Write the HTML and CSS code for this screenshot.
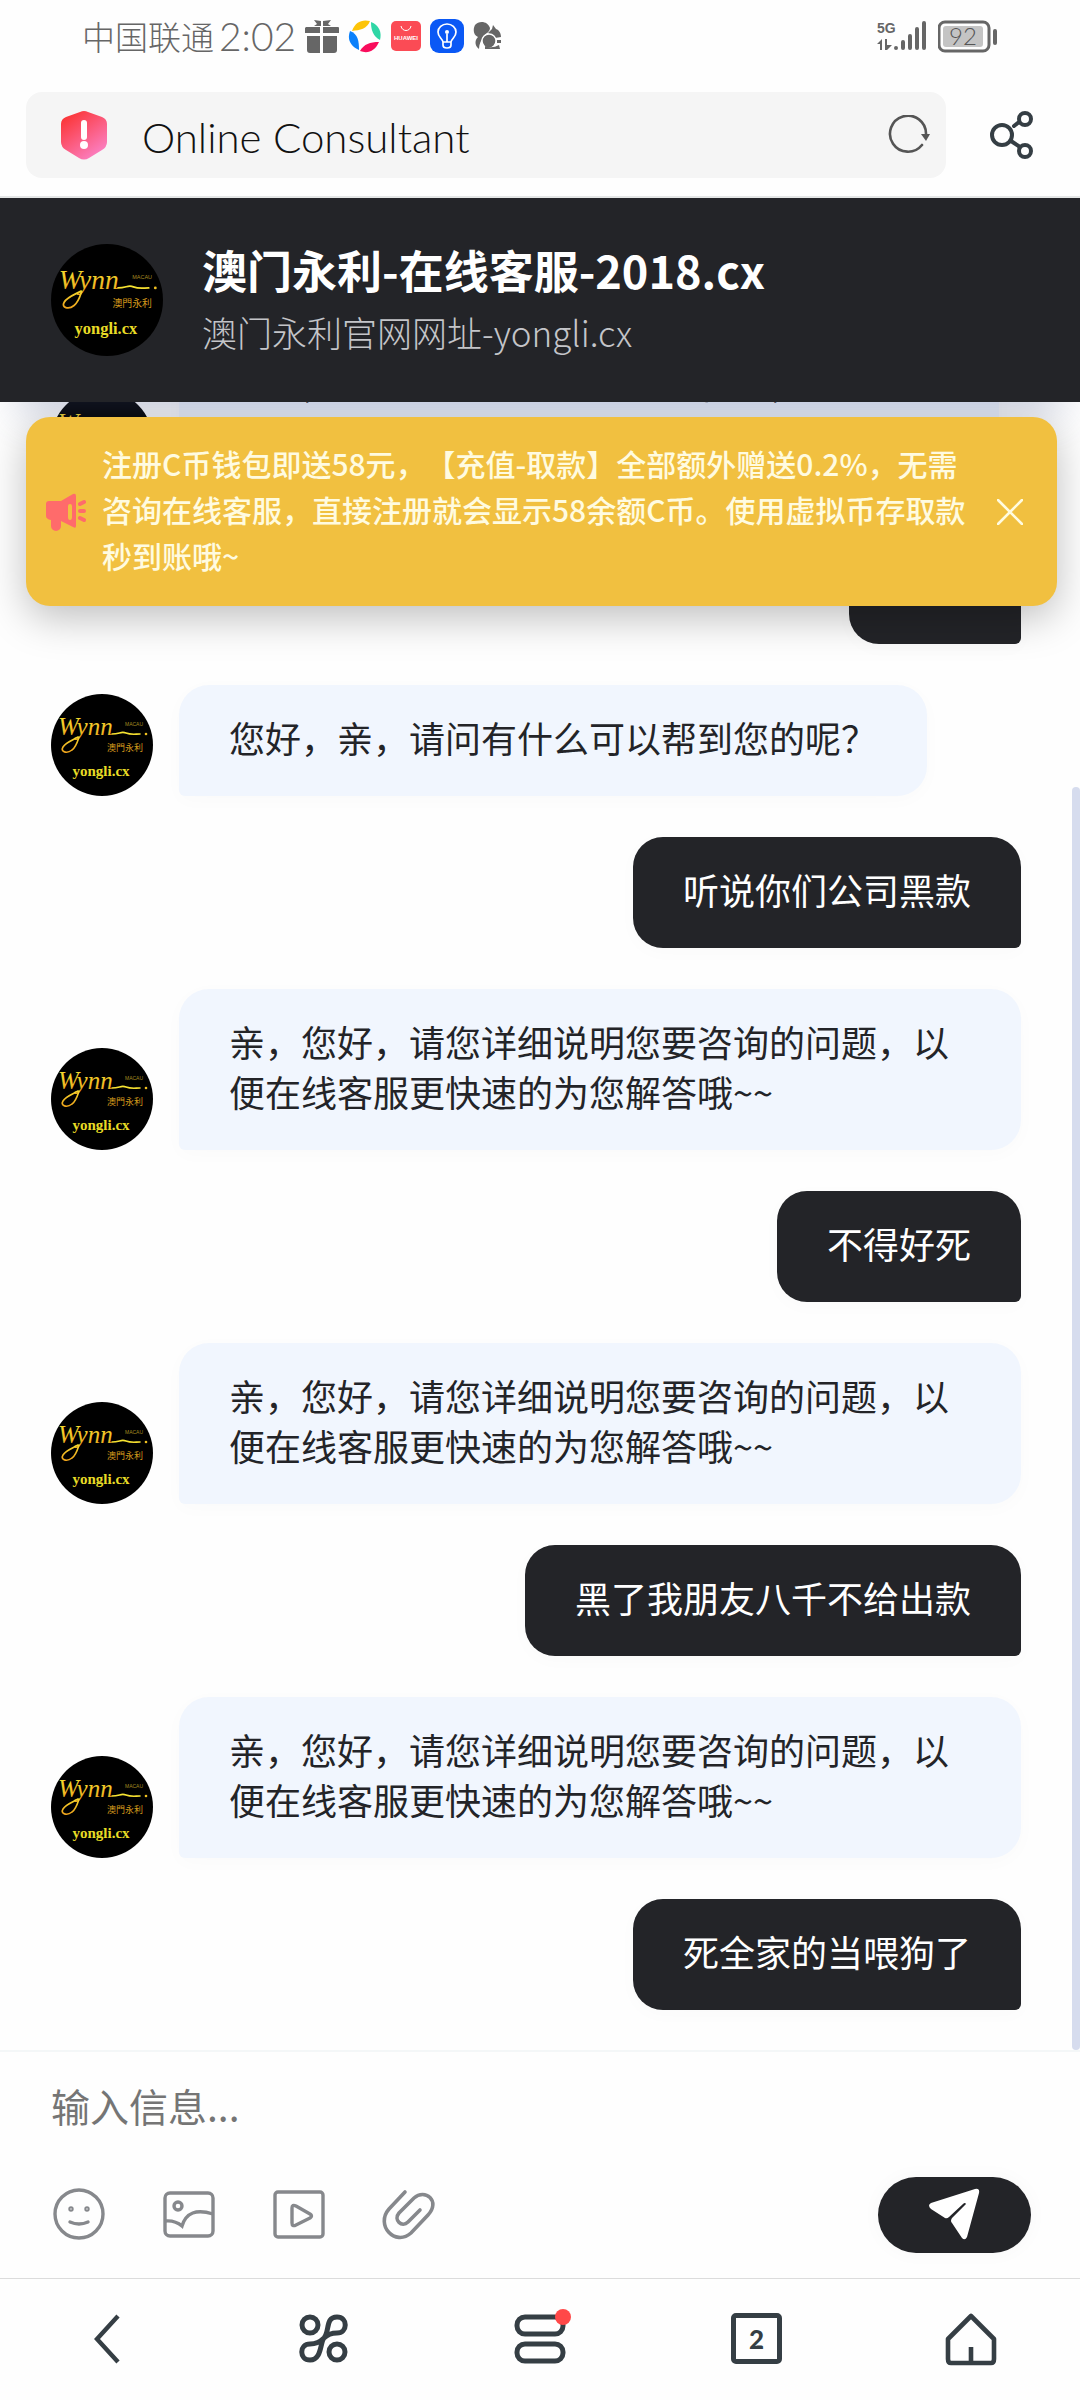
FILE: index.html
```html
<!DOCTYPE html>
<html lang="zh-CN">
<head>
    <meta charset="utf-8">
    <meta name="viewport" content="width=device-width, initial-scale=1">
    <title>Online Consultant</title>
    <link rel="stylesheet" href="styles.css">
</head>
<body>
    <!-- shared avatar -->
    <svg class="defs" width="0" height="0" aria-hidden="true">
        <defs>
            <linearGradient id="gold" x1="0" y1="0" x2="0" y2="1">
                <stop offset="0" stop-color="#f6e532"/>
                <stop offset="1" stop-color="#eda31c"/>
            </linearGradient>
            <linearGradient id="shield" x1="0" y1="0" x2="0.7" y2="1">
                <stop offset="0.1" stop-color="#fb3434"/>
                <stop offset="1" stop-color="#fb80c3"/>
            </linearGradient>
        </defs>
        <symbol id="logo" viewBox="0 0 102 102">
            <circle cx="51" cy="51" r="51" fill="#000"/>
            <text x="7" y="41" class="logo-script">Wynn</text>
            <path d="M28 43c-2 6-3 10-7 13-5 4-12 2-9-3 3-5 10-7 15-10M61 40c8 0 9-3 14-1s9 1 14 1" fill="none" stroke="url(#gold)" stroke-width="1.6" stroke-linecap="round"/>
            <circle cx="95" cy="40" r="1.3" fill="#f0c020"/>
            <text x="74" y="32" class="logo-macau">MACAU</text>
            <text x="56" y="57" class="logo-zh">澳門永利</text>
            <text x="50" y="82" class="logo-site">yongli.cx</text>
        </symbol>
    </svg>

    <div class="status-bar">
        <div class="status-left">
            <span class="carrier">中国联通</span>
            <span class="clock">2:02</span>
            <svg width="34" height="34" viewBox="0 0 34 34" fill="#666"><path d="M1 8h14v6H0V9zM18 8h15q1 0 1 1v5H18zM2 17h13v17H5q-3 0-3-3zM18 17h14v14q0 3-3 3H18zM9 1l7 1v5H9l3-2zM26 1l-8 1v5h8l-3-2z"/></svg>
            <svg width="34" height="34" viewBox="0 0 34 34"><path d="M4 12C7 3 14 0 22 2c-3 8-10 9-18 10z" fill="#fdc408"/><path d="M23 3c8 3 11 10 9 18-7-4-9-10-9-18z" fill="#2fd6a5"/><path d="M31 23c-4 9-11 12-19 9 4-7 10-9 19-9z" fill="#f90d5c"/><path d="M2 12c8 3 9 10 9 19C2 27-1 20 2 12z" fill="#0c81fb"/></svg>
            <svg width="30" height="30" viewBox="0 0 30 30"><rect width="30" height="30" rx="5" fill="#fb4b55"/><path d="M10 5c1 6 9 6 10 0" fill="none" stroke="#fff"/><text x="15" y="19" class="huawei">HUAWEI</text></svg>
            <svg width="34" height="34" viewBox="0 0 34 34"><rect width="34" height="34" rx="9" fill="#0a58f5"/><path d="M13 23c-1-4-5-5-5-10a9 8 0 0 1 18 0c0 5-4 6-5 10zM13 23v3q0 3 4 3t4-3v-3M17 15v8" fill="none" stroke="#fff" stroke-width="1.7"/><circle cx="17" cy="13" r="2" fill="#fff"/></svg>
            <svg width="30" height="30" viewBox="0 0 30 30" fill="#666"><path d="M6 28C1 24 2 19 5 16 0 14 0 8 2 4c4-5 13-4 15 3 0 4-4 5-6 8-3 4-5 8-5 13zM15 12l4-4 1-4 3 4c3 1 5 4 5 8l-6 1z"/><circle cx="16" cy="20" r="7" stroke="#fff" stroke-width="1.4"/><path d="M12 25q7 3 14-1l1 4H12zM24 19h4v3h-4z"/></svg>
        </div>
        <div class="status-right">
            <svg width="52" height="34" viewBox="0 0 52 34" fill="#666"><text x="0" y="14" class="net">5G</text><path d="M0 25l5-5v11H3v-6zM8 20h2v6h5l-5 5H8z"/><path d="M19 29v0M26 23v6M33 17v12M40 10v19M47 4v25" stroke="#666" stroke-width="4" stroke-linecap="round"/></svg>
            <svg width="60" height="34" viewBox="0 0 60 34"><rect x="1" y="3" width="50" height="29" rx="6" fill="none" stroke="#666" stroke-width="3"/><rect x="5" y="7" width="40" height="21" rx="3" fill="#c4c4c4"/><text x="25" y="26" class="level">92</text><path d="M57 12v12" stroke="#666" stroke-width="4" stroke-linecap="round"/></svg>
        </div>
    </div>

    <div class="browser-bar">
        <div class="address">
            <svg width="48" height="50" viewBox="0 0 48 50"><path d="M20 2q4-2 8 0l14 5q5 2 5 7v18q0 5-5 8L29 48q-5 3-10 0L6 40q-5-3-5-8V14q0-5 5-7z" fill="url(#shield)"/><path d="M24 13v14" stroke="#fff" stroke-width="6" stroke-linecap="round"/><circle cx="24" cy="35" r="4" fill="#fff"/></svg>
            <input type="text" class="address-input" aria-label="网址" value="Online Consultant" readonly>
            <button class="icon-button" aria-label="刷新">
                <svg width="42" height="40" viewBox="0 0 42 40"><path d="M34 30A18 18 0 1 1 38 19" fill="none" stroke="#555" stroke-width="2.6" stroke-linecap="round"/><path d="M33 19h9l-4 7z" fill="#555"/></svg>
            </button>
        </div>
        <button class="icon-button" aria-label="分享">
            <svg width="44" height="50" viewBox="0 0 44 50" fill="none" stroke="#353e44" stroke-width="4" stroke-linecap="round"><circle cx="12" cy="25" r="10"/><circle cx="35" cy="9" r="6"/><circle cx="35" cy="41" r="6"/><path d="M24 16l5-4M21 31l9 6"/></svg>
        </button>
    </div>

    <header class="chat-header">
        <svg class="header-avatar"><use href="#logo"/></svg>
        <div>
            <h1>澳门永利-在线客服-2018.cx</h1>
            <p>澳门永利官网网址-yongli.cx</p>
        </div>
    </header>

    <main class="chat">
        <div class="notice">
            <svg width="40" height="38" viewBox="0 0 40 38"><path fill="#ff6b6b" fill-rule="evenodd" d="M3 8h12L27 1q3-1 3 2v30q0 3-3 1l-12-6v5a5 5 0 0 1-10 0v-6q-5-1-5-4V11q0-3 3-3zm21 3q-2 0-2 2v11q0 3 2 3t2-3V13q0-2-2-2z"/><path d="M34 11l4-2M34 18h4M34 25l4 2" stroke="#ff6b6b" stroke-width="4" stroke-linecap="round"/></svg>
            <p>注册C币钱包即送58元，【充值-取款】全部额外赠送0.2%，无需咨询在线客服，直接注册就会显示58余额C币。使用虚拟币存取款秒到账哦~</p>
            <button class="icon-button" aria-label="关闭">
                <svg width="26" height="26" viewBox="0 0 26 26"><path d="M1 1l24 24M25 1L1 25" stroke="#fffbe0" stroke-width="2.6" stroke-linecap="round"/></svg>
            </button>
        </div>

        <div class="messages">
            <div class="message">
                <svg class="avatar"><use href="#logo"/></svg>
                <div class="bubble">您好，欢迎光临澳门永利在线客服，请您稍等<br>有什么可以帮到您的请直接说<span class="flowers"><i></i><i></i><i></i></span></div>
            </div>
            <div class="message mine"><div class="bubble">你好</div></div>
            <div class="message">
                <svg class="avatar"><use href="#logo"/></svg>
                <div class="bubble">您好，亲，请问有什么可以帮到您的呢？</div>
            </div>
            <div class="message mine"><div class="bubble">听说你们公司黑款</div></div>
            <div class="message">
                <svg class="avatar"><use href="#logo"/></svg>
                <div class="bubble">亲，您好，请您详细说明您要咨询的问题，以便在线客服更快速的为您解答哦~~</div>
            </div>
            <div class="message mine"><div class="bubble">不得好死</div></div>
            <div class="message">
                <svg class="avatar"><use href="#logo"/></svg>
                <div class="bubble">亲，您好，请您详细说明您要咨询的问题，以便在线客服更快速的为您解答哦~~</div>
            </div>
            <div class="message mine"><div class="bubble">黑了我朋友八千不给出款</div></div>
            <div class="message">
                <svg class="avatar"><use href="#logo"/></svg>
                <div class="bubble">亲，您好，请您详细说明您要咨询的问题，以便在线客服更快速的为您解答哦~~</div>
            </div>
            <div class="message mine"><div class="bubble">死全家的当喂狗了</div></div>
        </div>
        <div class="scroll-thumb"></div>
    </main>

    <form class="composer">
        <input type="text" class="composer-input" aria-label="输入信息" placeholder="输入信息...">
        <div class="tools">
            <button type="button" class="icon-button" aria-label="表情">
                <svg width="54" height="54" viewBox="0 0 54 54" fill="none" stroke="#86888c" stroke-width="3.4" stroke-linecap="round"><circle cx="28" cy="26" r="24"/><path d="M19 34q9 4 18 0"/><circle cx="20" cy="21" r="1"/><circle cx="36" cy="21" r="1"/></svg>
            </button>
            <button type="button" class="icon-button" aria-label="图片">
                <svg width="54" height="54" viewBox="0 0 54 54" fill="none" stroke="#86888c" stroke-width="3.4"><rect x="4" y="5" width="48" height="43" rx="5"/><circle cx="17" cy="18" r="4"/><path d="M4 33q10-1 17 5 6-20 31-12"/></svg>
            </button>
            <button type="button" class="icon-button" aria-label="视频">
                <svg width="54" height="54" viewBox="0 0 54 54" fill="none" stroke="#86888c" stroke-width="3.4" stroke-linejoin="round"><rect x="4" y="4" width="48" height="45" rx="3"/><path d="M21 20q0-4 4-2l14 8q3 2 0 4l-14 7q-4 2-4-2z"/></svg>
            </button>
            <button type="button" class="icon-button" aria-label="附件">
                <svg width="54" height="54" viewBox="0 0 54 54" fill="none" stroke="#86888c" stroke-width="3.6" stroke-linecap="round"><path d="M24 4L8 21C-6 37 14 59 30 45l17-18C60 13 44 0 33 10L18 25c-6 7 3 15 9 9l12-12"/></svg>
            </button>
            <button type="submit" class="send" aria-label="发送">
                <svg width="52" height="54" viewBox="0 0 52 54" fill="#fff"><path d="M46 1q5-1 4 4L38 49q-2 4-5 1L23 35q-2-2 0-5l14-14q-1-2-3 0L20 29q-2 2-4 1L2 21q-4-4 0-6z"/></svg>
            </button>
        </div>
    </form>

    <nav class="browser-nav">
        <button class="icon-button" aria-label="返回">
            <svg width="54" height="54" viewBox="0 0 54 54" fill="none" stroke="#353e44" stroke-width="4.4"><path d="M37 4L16 27l21 23"/></svg>
        </button>
        <button class="icon-button" aria-label="应用">
            <svg width="54" height="54" viewBox="0 0 54 54" fill="none" stroke="#353e44" stroke-width="5"><circle cx="12" cy="13" r="8"/><circle cx="39" cy="40" r="8"/><path d="M26 26c6-7 1-21 13-21 11 0 11 16 0 16-5 0-9 1-13 5s-2 22-14 22c-11 0-11-16 0-16 5 0 10-2 14-6z"/></svg>
        </button>
        <button class="icon-button has-dot" aria-label="菜单">
            <svg width="54" height="54" viewBox="0 0 54 54" fill="none" stroke="#353e44" stroke-width="5"><rect x="3" y="5" width="46" height="17" rx="8"/><rect x="3" y="32" width="46" height="17" rx="8"/></svg>
        </button>
        <button class="icon-button tab-count" aria-label="2 个标签页">2</button>
        <button class="icon-button" aria-label="主页">
            <svg width="54" height="54" viewBox="0 0 54 54" fill="none" stroke="#353e44" stroke-width="4.6" stroke-linejoin="round"><path d="M26 4L3 27v20q0 4 3 4h40q3 0 3-4V27zM26 51V35"/></svg>
        </button>
    </nav>
</body>
</html>
```

FILE: styles.css
```css
* {
    box-sizing: border-box;
}
body {
    margin: 0;
    height: 100vh;
    display: flex;
    flex-direction: column;
    background: #fefefe;
    color: #232428;
    font-family: "Noto Sans CJK SC", sans-serif;
}
h1, p {
    margin: 0;
}
svg {
    display: block;
    flex: none;
}
.defs {
    position: absolute;
}
.icon-button {
    display: block;
    padding: 0;
    border: none;
    background: none;
    cursor: pointer;
}

/* avatar artwork */
.logo-script {
    font: italic 25px "Liberation Serif", serif;
    fill: url(#gold);
}
.logo-macau {
    font: 5px "Liberation Sans", sans-serif;
    fill: #a58a20;
}
.logo-zh {
    font: 9px "Noto Sans CJK TC", sans-serif;
    fill: #d49a1c;
}
.logo-site {
    font: bold 15px "Liberation Serif", serif;
    fill: #e8dc26;
    text-anchor: middle;
}

/* phone status bar */
.status-bar {
    display: flex;
    justify-content: space-between;
    align-items: center;
    height: 74px;
    padding: 0 82px 2px;
    color: #666;
}
.status-left, .status-right {
    display: flex;
    align-items: center;
    gap: 9px;
}
.carrier {
    margin-right: -4px;
    font-size: 33px;
    font-weight: 300;
}
.clock {
    font-family: Lato, sans-serif;
    font-size: 39px;
    font-weight: 300;
}
.huawei {
    font: bold 6px "Liberation Sans", sans-serif;
    fill: #fff;
    text-anchor: middle;
}
.net {
    font: bold 14px "Liberation Sans", sans-serif;
}
.level {
    font: 300 24px Lato, sans-serif;
    fill: #555;
    text-anchor: middle;
}

/* browser address row */
.browser-bar {
    display: flex;
    align-items: center;
    gap: 44px;
    padding: 18px 46px 18px 26px;
    border-bottom: 2px solid #e4e6e6;
}
.address {
    flex: 1;
    display: flex;
    align-items: center;
    height: 86px;
    padding: 0 16px 0 34px;
    background: #f5f5f5;
    border-radius: 16px;
}
.address-input {
    flex: 1;
    min-width: 0;
    margin-left: 34px;
    padding: 4px 0 0;
    border: none;
    outline: none;
    background: none;
    color: #111;
    font-family: Lato, sans-serif;
    font-size: 42px;
    font-weight: 300;
}

/* chat header */
.chat-header {
    position: relative;
    z-index: 2;
    display: flex;
    align-items: center;
    gap: 39px;
    height: 204px;
    padding: 0 51px;
    background: #232428;
}
.header-avatar {
    width: 112px;
    height: 112px;
}
.chat-header h1 {
    color: #fff;
    font-size: 45px;
    line-height: 64px;
    font-weight: 700;
}
.chat-header p {
    color: #c4c5c9;
    font-size: 35px;
    line-height: 60px;
    font-weight: 300;
}

/* conversation */
.chat {
    position: relative;
    flex: 1;
    min-height: 0;
    display: flex;
    flex-direction: column;
    justify-content: flex-end;
    overflow: hidden;
}
.chat::before {
    content: "";
    position: absolute;
    z-index: 1;
    top: -30px;
    left: 30px;
    right: 30px;
    height: 30px;
    box-shadow: 0 0 40px 10px rgba(80, 95, 150, 0.3);
}
.notice {
    position: absolute;
    z-index: 2;
    top: 15px;
    left: 26px;
    right: 23px;
    display: flex;
    align-items: center;
    gap: 16px;
    padding: 0 34px 0 20px;
    background: #f1c040;
    border-radius: 24px;
    box-shadow: 0 12px 40px rgba(0, 0, 0, 0.25);
}
.notice p {
    flex: 1;
    padding: 23px 8px 28px 0;
    color: #fffbe0;
    font-size: 30px;
    line-height: 46px;
    font-weight: 500;
    text-spacing-trim: space-all;
}
.messages {
    display: flex;
    flex-direction: column;
    gap: 41px;
    padding: 0 59px 40px 51px;
}
.message {
    display: flex;
    align-items: flex-end;
    gap: 26px;
}
.mine {
    justify-content: flex-end;
}
.avatar {
    width: 102px;
    height: 102px;
}
.bubble {
    padding: 27px 50px 34px;
    background: #f1f6fe;
    border-radius: 30px 30px 30px 6px;
    box-shadow: 0 4px 20px rgba(0, 0, 0, 0.02);
    font-size: 36px;
    line-height: 50px;
    text-spacing-trim: space-all;
}
.mine .bubble {
    background: #232428;
    border-radius: 30px 30px 6px 30px;
    color: #fff;
}
.flowers {
    display: inline-flex;
    gap: 8px;
    vertical-align: middle;
}
.flowers i {
    width: 36px;
    height: 36px;
    border-radius: 50%;
    background: #d9861f;
}
.scroll-thumb {
    position: absolute;
    top: 385px;
    right: 0;
    bottom: 0;
    width: 8px;
    border-radius: 4px;
    background: #d6dcee;
}

/* composer */
.composer {
    padding: 27px 49px 25px 51px;
    border-top: 2px solid #f4f7f8;
}
.composer-input {
    display: block;
    width: 100%;
    height: 52px;
    padding: 0;
    border: none;
    outline: none;
    background: none;
    font-family: inherit;
    font-size: 39px;
}
.composer-input::placeholder {
    color: #757575;
    opacity: 1;
}
.tools {
    display: flex;
    align-items: center;
    gap: 56px;
    margin-top: 46px;
}
.send {
    display: flex;
    align-items: center;
    justify-content: center;
    width: 153px;
    height: 76px;
    margin-left: auto;
    padding: 0;
    border: none;
    border-radius: 38px;
    background: #232428;
    box-shadow: 0 0 20px rgba(0, 0, 0, 0.03);
    cursor: pointer;
}

/* browser bottom bar */
.browser-nav {
    display: flex;
    align-items: center;
    height: 122px;
    padding-bottom: 2px;
    border-top: 1px solid #dcdcdc;
}
.browser-nav .icon-button {
    width: 54px;
    height: 54px;
    margin: 0 auto;
}
.has-dot {
    position: relative;
}
.has-dot::after {
    content: "";
    position: absolute;
    top: -3px;
    right: -3px;
    width: 16px;
    height: 16px;
    border-radius: 50%;
    background: #ff4848;
}
.browser-nav .tab-count {
    width: 51px;
    height: 51px;
    border: 5px solid #353e44;
    border-radius: 5px;
    color: #353e44;
    font: 900 26px Lato, sans-serif;
}
```
